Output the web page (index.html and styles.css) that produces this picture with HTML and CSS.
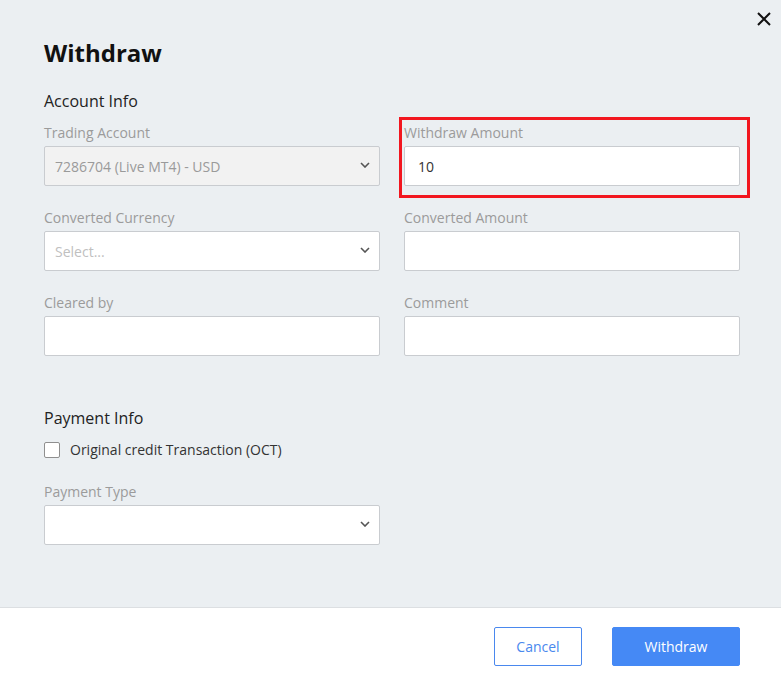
FILE: index.html
```html
<!DOCTYPE html>
<html lang="en">
<head>
    <meta charset="UTF-8">
    <meta name="viewport" content="width=device-width, initial-scale=1.0">
    <title>Withdraw</title>
    <link rel="stylesheet" href="styles.css">
</head>
<body>
    <div class="modal">
        <button class="close-btn" aria-label="Close">
            <svg width="14" height="14" viewBox="0 0 14 14">
                <path d="M1 1 L13 13 M13 1 L1 13" stroke="#111" stroke-width="2" fill="none"/>
            </svg>
        </button>
        <div class="modal-body">
            <h1 class="modal-title">Withdraw</h1>

            <h3 class="section-title">Account Info</h3>
            <div class="form-grid">
                <div class="field">
                    <label>Trading Account</label>
                    <div class="select disabled">
                        <span>7286704 (Live MT4) - USD</span>
                        <svg class="chevron" width="10" height="6" viewBox="0 0 10 6"><path d="M1 1 L5 5 L9 1" stroke="#555" stroke-width="1.6" fill="none"/></svg>
                    </div>
                </div>
                <div class="field highlighted">
                    <label>Withdraw Amount</label>
                    <div class="input">10</div>
                </div>
                <div class="field">
                    <label>Converted Currency</label>
                    <div class="select">
                        <span class="placeholder">Select...</span>
                        <svg class="chevron" width="10" height="6" viewBox="0 0 10 6"><path d="M1 1 L5 5 L9 1" stroke="#555" stroke-width="1.6" fill="none"/></svg>
                    </div>
                </div>
                <div class="field">
                    <label>Converted Amount</label>
                    <div class="input"></div>
                </div>
                <div class="field">
                    <label>Cleared by</label>
                    <div class="input"></div>
                </div>
                <div class="field">
                    <label>Comment</label>
                    <div class="input"></div>
                </div>
            </div>

            <h3 class="section-title payment">Payment Info</h3>
            <div class="checkbox-row">
                <span class="checkbox"></span>
                <span>Original credit Transaction (OCT)</span>
            </div>
            <div class="form-grid single">
                <div class="field">
                    <label>Payment Type</label>
                    <div class="select">
                        <span></span>
                        <svg class="chevron" width="10" height="6" viewBox="0 0 10 6"><path d="M1 1 L5 5 L9 1" stroke="#555" stroke-width="1.6" fill="none"/></svg>
                    </div>
                </div>
            </div>
        </div>
        <div class="modal-footer">
            <button class="btn btn-outline">Cancel</button>
            <button class="btn btn-primary">Withdraw</button>
        </div>
    </div>
</body>
</html>
```

FILE: styles.css
```css
body {
    margin: 0;
    font-family: "Open Sans", "Liberation Sans", sans-serif;
    color: #333;
}
.modal {
    position: relative;
    width: 781px;
    height: 682px;
    background-color: #ebeff2;
    display: flex;
    flex-direction: column;
}
.close-btn {
    position: absolute;
    top: 12px;
    right: 10px;
    width: 14px;
    height: 14px;
    padding: 0;
    border: none;
    background: none;
    display: flex;
}
.modal-body {
    height: 607px;
    box-sizing: border-box;
    padding: 37px 41px 0 44px;
}
.modal-title {
    margin: 0;
    font-size: 24px;
    line-height: 32px;
    font-weight: 700;
    color: #111;
}
.section-title {
    margin: 21px 0 11px;
    font-size: 16px;
    line-height: 22px;
    font-weight: 400;
    color: #222;
}
.section-title.payment {
    margin-top: 51px;
    margin-bottom: 11px;
}
.form-grid {
    display: grid;
    grid-template-columns: 336px 336px;
    column-gap: 24px;
    row-gap: 22px;
}
.form-grid.single {
    margin-top: 22px;
}
.field {
    display: flex;
    flex-direction: column;
    position: relative;
}
.field label {
    font-size: 14px;
    line-height: 20px;
    color: #9b9b9b;
    margin-bottom: 3px;
}
.field.highlighted::after {
    content: "";
    position: absolute;
    top: -6px;
    left: -5px;
    right: -10px;
    bottom: -12px;
    border: 3px solid #f2161f;
}
.input, .select {
    height: 40px;
    box-sizing: border-box;
    border: 1px solid #c9ccd0;
    border-radius: 2px;
    background-color: #fff;
    font-size: 14px;
    display: flex;
    align-items: center;
}
.input {
    padding: 0 13px;
    color: #333;
}
.select {
    padding: 0 9px 0 10px;
    justify-content: space-between;
}
.select.disabled {
    background-color: #f2f2f2;
    color: #9a9a9a;
}
.placeholder {
    color: #c0c0c0;
}
.chevron {
    margin-top: -3px;
}
.checkbox-row {
    display: flex;
    align-items: center;
    gap: 10px;
    font-size: 14px;
    line-height: 20px;
    color: #333;
}
.checkbox {
    width: 16px;
    height: 16px;
    box-sizing: border-box;
    border: 1px solid #8f8f8f;
    border-radius: 2px;
    background-color: #fff;
}
.modal-footer {
    flex: 1;
    background-color: #fff;
    border-top: 1px solid #dcdfe2;
    padding: 19px 41px 0 0;
    display: flex;
    justify-content: flex-end;
    align-items: flex-start;
    gap: 30px;
}
.btn {
    height: 39px;
    border-radius: 2px;
    font-family: inherit;
    font-size: 14px;
    cursor: pointer;
}
.btn-outline {
    width: 88px;
    background-color: #fff;
    border: 1px solid #4a88ee;
    color: #4a88ee;
}
.btn-primary {
    width: 128px;
    background-color: #4589f5;
    border: 1px solid #4589f5;
    color: #fff;
}
```
